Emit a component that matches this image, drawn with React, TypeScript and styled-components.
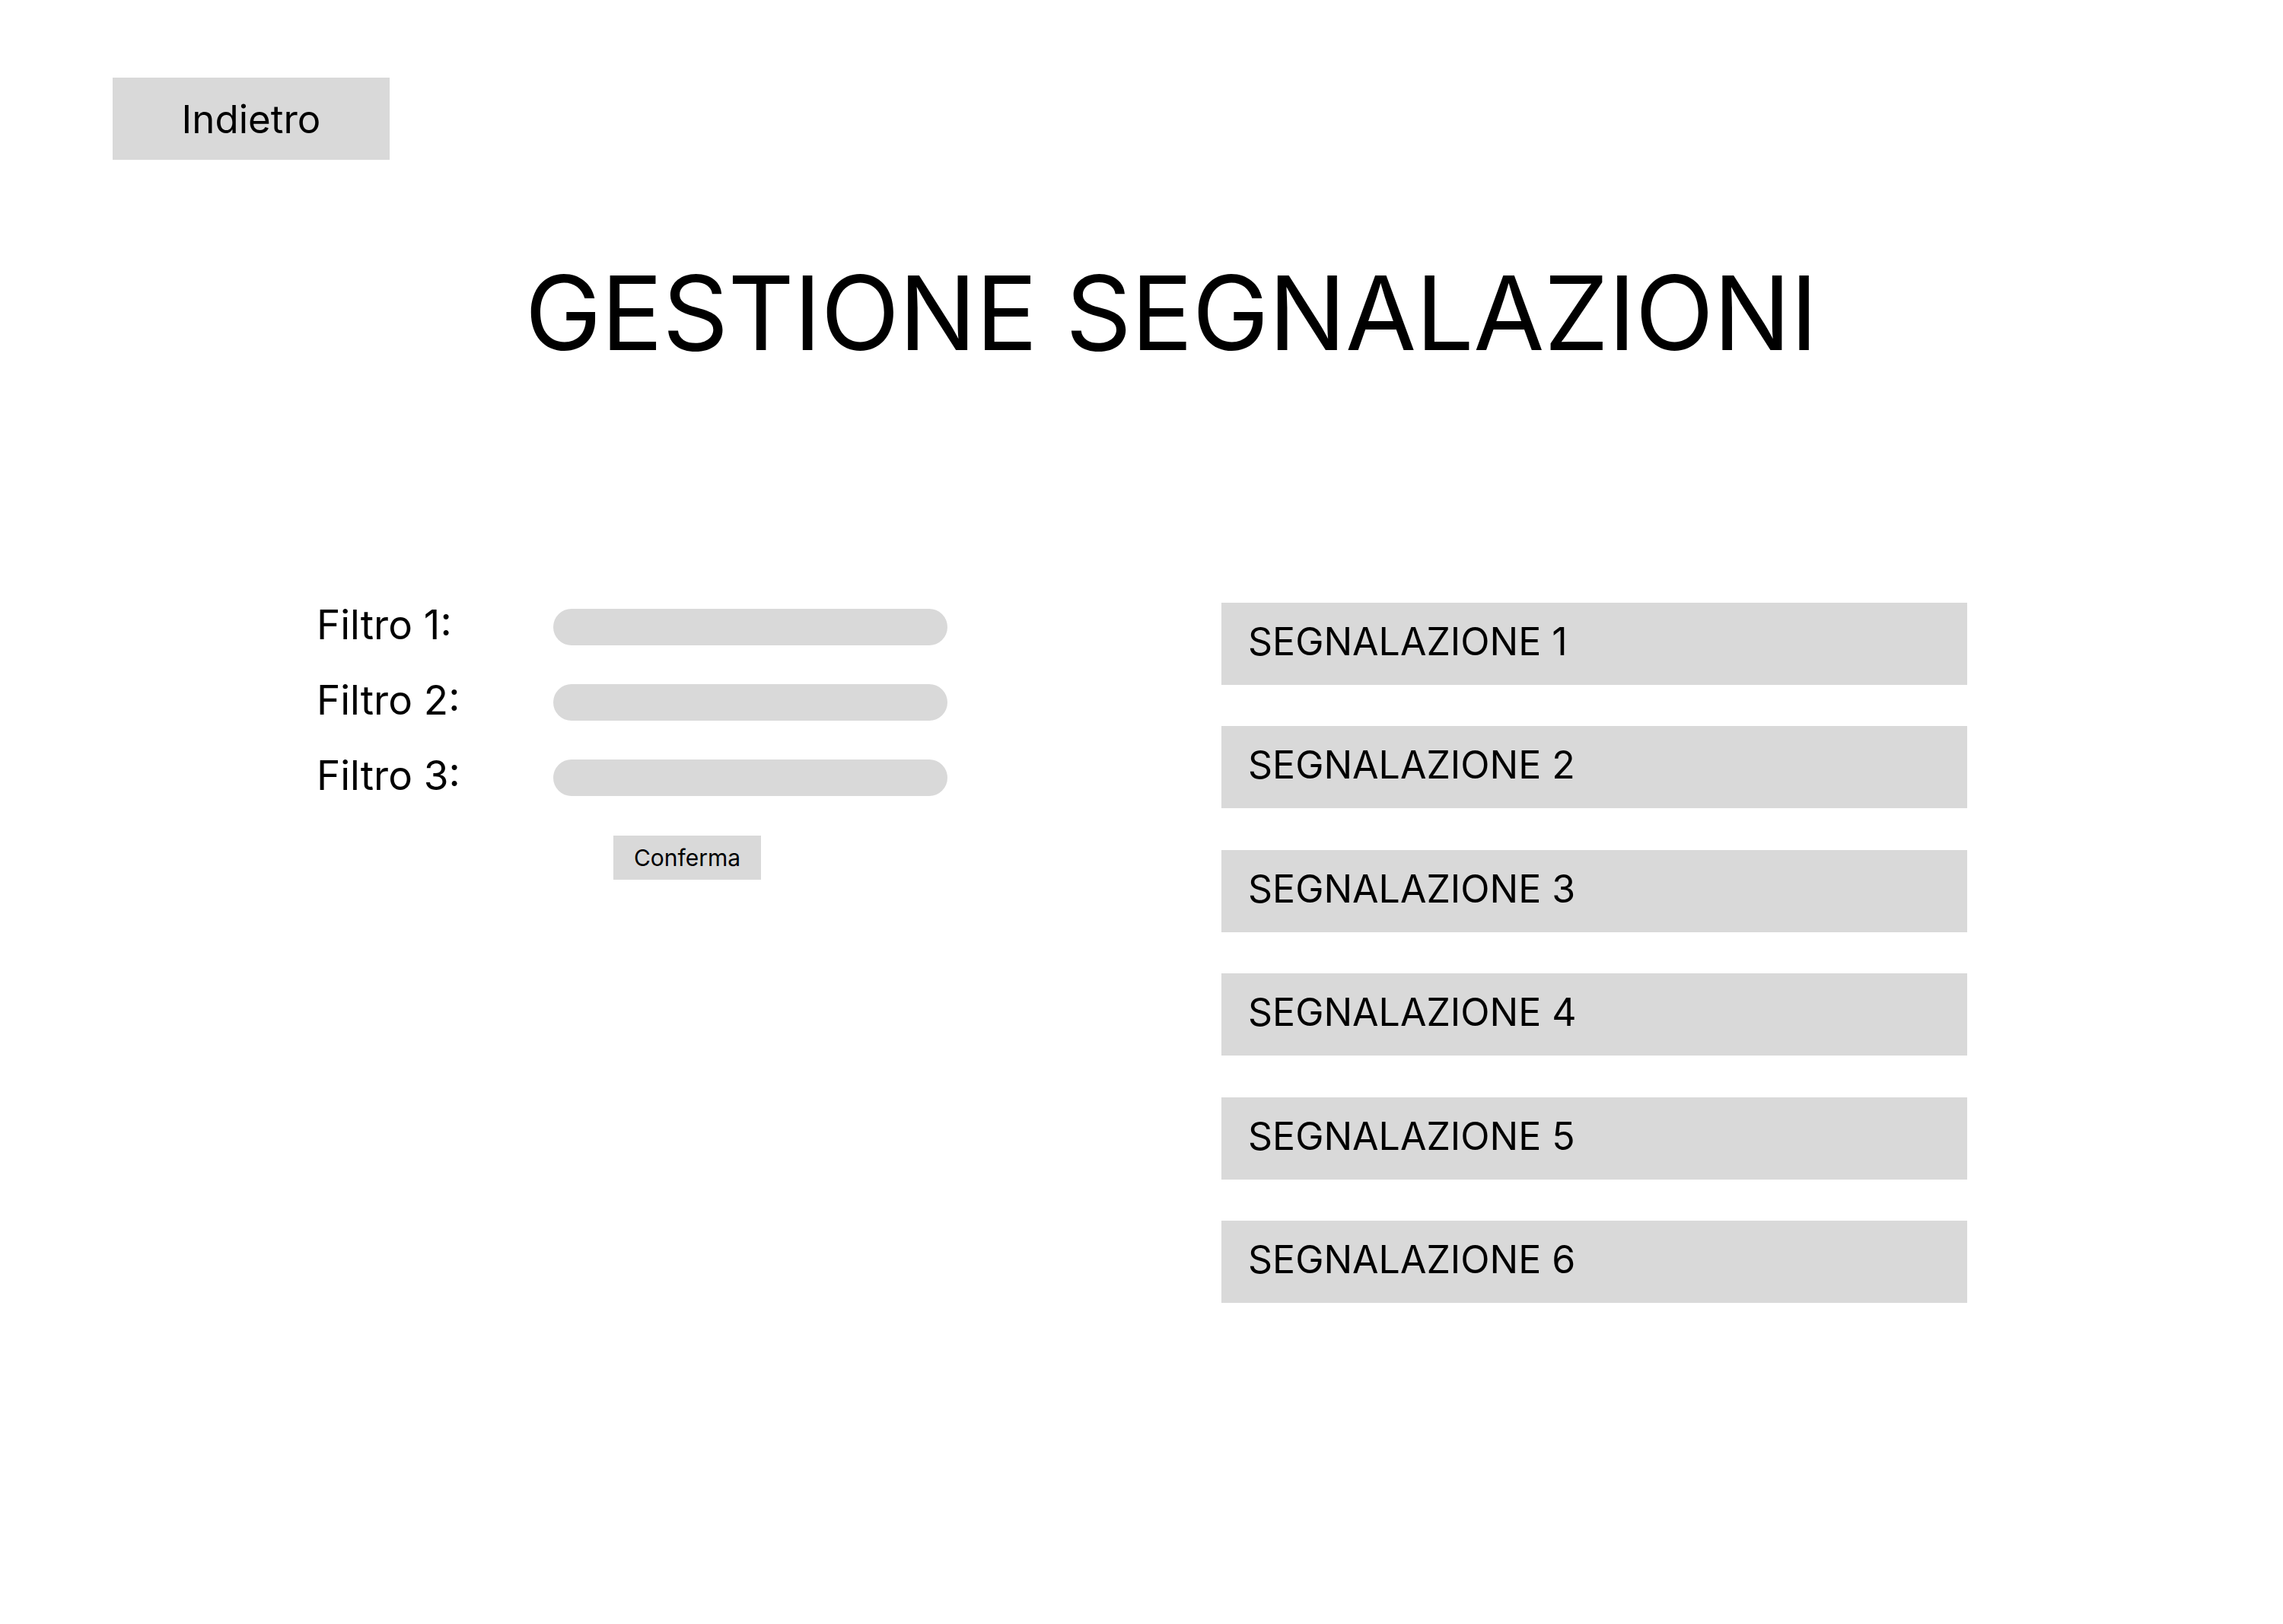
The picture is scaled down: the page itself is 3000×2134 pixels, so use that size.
import React from "react";
import styled, { createGlobalStyle } from "styled-components";

const GlobalStyle = createGlobalStyle`
  html, body {
    margin: 0;
    padding: 0;
    background: #ffffff;
  }
  body {
    font-family: Inter, "Noto Sans", "Liberation Sans", sans-serif;
    color: #000000;
  }
  * { box-sizing: border-box; }
`;

const Page = styled.div`
  width: 3000px;
  min-height: 2134px;
  padding-top: 102px;
  background: #ffffff;
  display: flex;
  flex-direction: column;
`;

const Header = styled.header`
  padding-left: 148px;
  display: flex;
`;

const GrayButton = styled.button<{ $w: number; $h: number; $size: number }>`
  width: ${(p) => p.$w}px;
  height: ${(p) => p.$h}px;
  background: #d9d9d9;
  border: none;
  border-radius: 0;
  padding: 0;
  margin: 0;
  font-family: Inter, "Noto Sans", "Liberation Sans", sans-serif;
  font-size: ${(p) => p.$size}px;
  font-weight: 400;
  color: #000000;
  display: flex;
  align-items: center;
  justify-content: center;
  cursor: pointer;
`;

const Title = styled.h1`
  margin: 134px 0 0 0;
  padding-left: 78px;
  font-size: 135px;
  font-weight: 400;
  line-height: 1;
  text-align: center;
  letter-spacing: -0.6px;
`;

const Main = styled.main`
  margin-top: 313px;
  padding-left: 416px;
  display: grid;
  grid-template-columns: 829px 980px;
  column-gap: 360px;
  align-items: start;
`;

const FilterColumn = styled.section`
  padding-top: 8px;
  display: flex;
  flex-direction: column;
`;

const FilterList = styled.div`
  display: flex;
  flex-direction: column;
  gap: 51px;
`;

const FilterRow = styled.div`
  display: grid;
  grid-template-columns: 311px 518px;
  grid-template-rows: 48px;
  height: 48px;
  align-items: center;
`;

const FilterLabel = styled.label`
  font-size: 53px;
  line-height: 1;
  margin-bottom: 6px;
  white-space: nowrap;
`;

const FilterInput = styled.div`
  height: 48px;
  width: 518px;
  border-radius: 24px;
  background: #d9d9d9;
`;

const ConfirmWrap = styled.div`
  margin-top: 52px;
  padding-left: 390px;
  display: flex;
`;

const ReportList = styled.ul`
  list-style: none;
  margin: 0;
  padding: 0;
  display: flex;
  flex-direction: column;
  gap: 54.4px;
`;

const ReportItem = styled.li`
  height: 108px;
  background: #d9d9d9;
  display: flex;
  align-items: center;
  padding: 0 0 6px 35px;
  font-size: 50px;
  line-height: 1;
`;

const filters = ["Filtro 1:", "Filtro 2:", "Filtro 3:"];
const reports = [1, 2, 3, 4, 5, 6].map((n) => `SEGNALAZIONE ${n}`);

export default function App() {
  return (
    <>
      <GlobalStyle />
      <Page>
        <Header>
          <GrayButton $w={364} $h={108} $size={51}>
            Indietro
          </GrayButton>
        </Header>
        <Title>GESTIONE SEGNALAZIONI</Title>
        <Main>
          <FilterColumn>
            <FilterList>
              {filters.map((f) => (
                <FilterRow key={f}>
                  <FilterLabel>{f}</FilterLabel>
                  <FilterInput />
                </FilterRow>
              ))}
            </FilterList>
            <ConfirmWrap>
              <GrayButton $w={194} $h={58} $size={30}>
                Conferma
              </GrayButton>
            </ConfirmWrap>
          </FilterColumn>
          <ReportList>
            {reports.map((r) => (
              <ReportItem key={r}>{r}</ReportItem>
            ))}
          </ReportList>
        </Main>
      </Page>
    </>
  );
}
